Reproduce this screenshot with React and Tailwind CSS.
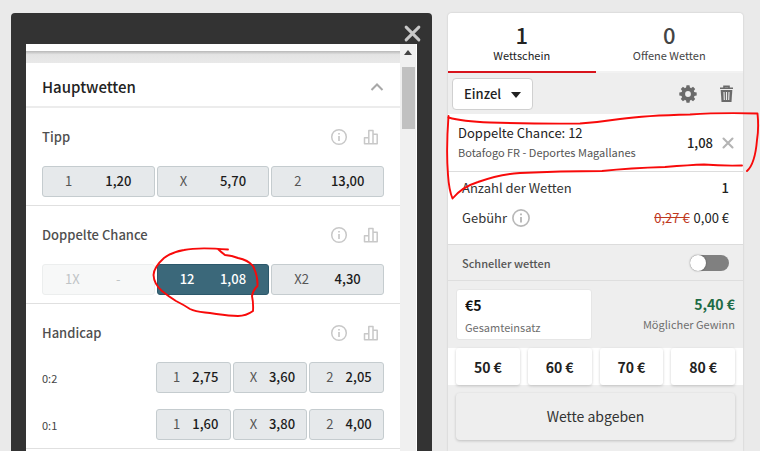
import React, { useState } from "react";

function InfoIcon({ className }) {
  return (
    <svg viewBox="0 0 18 18" fill="none" className={className} aria-hidden="true">
      <circle cx="9" cy="9" r="7.3" stroke="currentColor" strokeWidth="1.5" />
      <path d="M9 8v5M9 5v1.6" stroke="currentColor" strokeWidth="1.7" />
    </svg>
  );
}

function StatsIcon() {
  return (
    <svg viewBox="0 0 16 16" fill="none" className="size-4" aria-hidden="true">
      <path
        d="M1.500 14.700v-6h4.300v6zM5.800 14.700v-13.200h4.200v13.200zM10 14.700v-9.500h4.200v9.500z"
        stroke="currentColor"
        strokeWidth="1.5"
        strokeLinejoin="round"
      />
    </svg>
  );
}

function GearIcon() {
  const teeth = [0, 45, 90, 135, 180, 225, 270, 315];
  return (
    <svg viewBox="0 0 18 18" className="size-[18px]" aria-hidden="true">
      <circle cx="9" cy="9" r="4.8" fill="none" stroke="currentColor" strokeWidth="3.8" />
      {teeth.map((a) => (
        <path key={a} d="M7 3 7.5 0.3h3L11 3z" fill="currentColor" transform={`rotate(${a} 9 9)`} />
      ))}
    </svg>
  );
}

function TrashIcon() {
  return (
    <svg viewBox="0 0 16 18" fill="none" className="h-[18px] w-4" aria-hidden="true">
      <path d="M1 3.2h13M5 3V1.400h5V3" stroke="currentColor" strokeWidth="1.6" />
      <path d="M1.700 5h11.600l-.8 12H2.500z" fill="currentColor" />
      <path d="M5 7l.3 8M7.500 7v8M10 7l-.3 8" stroke="#eeeeee" strokeWidth="1.1" />
    </svg>
  );
}

function CloseIcon({ className, width }) {
  return (
    <svg viewBox="0 0 16 16" fill="none" className={className} aria-hidden="true">
      <path d="M2 2l12 12M14 2L2 14" stroke="currentColor" strokeWidth={width} strokeLinecap="round" />
    </svg>
  );
}

function Odd({ label, value, state, compact }) {
  const look =
    state === "selected"
      ? "border-[#2c586b] bg-[#3b687a] text-white"
      : state === "disabled"
        ? "border-[#eceeee] bg-[#f7f8f8] text-[#bfc4c6]"
        : "border-[#c5cccf] bg-[#e6e9eb] text-[#555555]";
  const valueLook = state ? "" : "text-[#1c1c1c]";
  return (
    <button
      type="button"
      disabled={state === "disabled"}
      className={`flex h-[31px] items-center rounded-[3px] border pb-[2px] text-left text-[13px] leading-5 ${compact ? "pr-[6px] pl-4" : "pr-[10px] pl-[22px]"} ${look}`}
    >
      <span className={`${compact ? "w-[14px]" : "w-7"} ${state === "selected" ? "font-medium" : ""}`}>{label}</span>
      <span className={`flex-1 text-center ${state === "disabled" ? "" : "font-medium"} ${valueLook}`}>{value}</span>
    </button>
  );
}

function Market({ title, children }) {
  return (
    <section className="border-b border-[#e0e0e0] px-4 pt-[19px] pb-2">
      <div className="mb-[19px] flex h-5 items-center">
        <h3 className="flex-1 text-[13px] leading-5 font-medium text-[#4f4f4f]">{title}</h3>
        <button type="button" aria-label="Info" className="mr-[15px] text-[#c8c8c8]">
          <InfoIcon className="size-[18px]" />
        </button>
        <button type="button" aria-label="Statistik" className="mr-[5px] text-[#c8c8c8]">
          <StatsIcon />
        </button>
      </div>
      {children}
    </section>
  );
}

function HandicapRow({ name, odds }) {
  return (
    <div className="flex items-center">
      <span className="w-1/3 text-[11px] leading-4 text-[#444444]">{name}</span>
      <div className="grid w-2/3 grid-cols-3 gap-[2px]">
        <Odd compact label="1" value={odds[0]} />
        <Odd compact label="X" value={odds[1]} />
        <Odd compact label="2" value={odds[2]} />
      </div>
    </div>
  );
}

function MarketsPanel() {
  return (
    <div className="flex flex-col rounded-t-[4px] bg-[#333333] px-[15px]">
      <div className="flex h-[31px] items-end justify-end">
        <button type="button" aria-label="Schließen" className="-mr-1 mb-[2px] text-[#c8c8c8]">
          <CloseIcon className="size-[17px]" width="2.8" />
        </button>
      </div>
      <div className="flex flex-1 bg-white">
        <div className="flex-1">
          <div className="h-[7px] bg-white" />
          <div className="h-3 bg-linear-to-b from-[#b8b8b8] via-[#e4e4e4] via-30% to-[#e9e9e9]" />
          <div className="flex h-[45px] items-center border-b-2 border-[#ececec] px-4 pt-1">
            <h2 className="flex-1 text-[15px] leading-6 font-medium text-[#222222]">Hauptwetten</h2>
            <button type="button" aria-label="Einklappen" className="text-[#a8a8a8]">
              <svg viewBox="0 0 14 8" fill="none" className="h-2 w-[14px]" aria-hidden="true">
                <path d="M1.500 7 7 1.500 12.500 7" stroke="currentColor" strokeWidth="2" />
              </svg>
            </button>
          </div>
          <Market title="Tipp">
            <div className="grid grid-cols-3 gap-[2px]">
              <Odd label="1" value="1,20" />
              <Odd label="X" value="5,70" />
              <Odd label="2" value="13,00" />
            </div>
          </Market>
          <Market title="Doppelte Chance">
            <div className="grid grid-cols-3 gap-[2px]">
              <Odd label="1X" value="-" state="disabled" />
              <Odd label="12" value="1,08" state="selected" />
              <Odd label="X2" value="4,30" />
            </div>
          </Market>
          <Market title="Handicap">
            <div className="flex flex-col gap-4">
              <HandicapRow name="0:2" odds={["2,75", "3,60", "2,05"]} />
              <HandicapRow name="0:1" odds={["1,60", "3,80", "4,00"]} />
            </div>
          </Market>
        </div>
        <div className="mr-px flex w-4 flex-col items-center bg-[#f0f0f0]">
          <svg viewBox="0 0 8 5" className="mt-[6px] mb-3 h-[5px] w-2" aria-hidden="true">
            <path d="M0 5 4 0l4 5z" fill="#444444" />
          </svg>
          <div className="h-[62px] w-[13px] bg-[#c1c1c1]" />
        </div>
      </div>
    </div>
  );
}

function Tab({ count, label, active }) {
  return (
    <button
      type="button"
      role="tab"
      aria-selected={active}
      className={`flex h-[60px] flex-1 flex-col items-center border-b-2 pt-2 ${active ? "border-[#d8141c] text-[#222222]" : "border-[#f2f2f2] text-[#444444]"}`}
    >
      <span className="text-[22px] leading-[26px] font-medium">{count}</span>
      <span className="text-[11px] leading-4">{label}</span>
    </button>
  );
}

function BetSlip() {
  const [fast, setFast] = useState(false);
  return (
    <div className="flex flex-col rounded-t-[4px] bg-[#eeeeee] text-[#333333] shadow-[0_0_2px_rgba(0,0,0,0.2)]">
      <div role="tablist" className="flex overflow-hidden rounded-t-[4px] bg-white">
        <Tab count="1" label="Wettschein" active />
        <Tab count="0" label="Offene Wetten" active={false} />
      </div>
      <div className="flex h-[41px] items-center pr-2 pl-1 text-[#6a6a6a]">
        <div className="relative">
          <select
            aria-label="Wettart"
            className="h-8 w-[81px] appearance-none rounded-[4px] border border-[#d0d0d0] bg-white pl-[11px] text-[13px] leading-5 font-medium text-[#222222]"
          >
            <option>Einzel</option>
          </select>
          <svg viewBox="0 0 10 6" className="pointer-events-none absolute top-[14px] right-3 h-[6px] w-[10px]" aria-hidden="true">
            <path d="M0 0h10L5 6z" fill="#222222" />
          </svg>
        </div>
        <button type="button" aria-label="Einstellungen" className="mr-[22px] ml-auto">
          <GearIcon />
        </button>
        <button type="button" aria-label="Alle löschen">
          <TrashIcon />
        </button>
      </div>
      <div className="flex h-[58px] items-center border-b border-[#dddddd] bg-white pr-[9px] pl-[10px]">
        <div className="flex-1 pb-[2px]">
          <p className="text-[13px] leading-5 text-[#222222]">Doppelte Chance: 12</p>
          <p className="text-[11px] leading-[18px] text-[#555555]">Botafogo FR - Deportes Magallanes</p>
        </div>
        <span className="mr-[9px] text-[13px] leading-5 font-medium text-[#222222]">1,08</span>
        <button type="button" aria-label="Wette entfernen" className="text-[#b4b4b4]">
          <CloseIcon className="size-3" width="2.8" />
        </button>
      </div>
      <dl className="flex flex-col gap-[10px] bg-white px-[14px] pt-[6px] pb-4 text-[13px] leading-5">
        <div className="flex justify-between">
          <dt>Anzahl der Wetten</dt>
          <dd className="font-medium text-[#222222]">1</dd>
        </div>
        <div className="flex justify-between">
          <dt className="flex items-center gap-1">
            Gebühr <InfoIcon className="size-5 text-[#b8b8b8]" />
          </dt>
          <dd className="flex gap-1 text-[#222222]">
            <s className="text-[#c0391f]">0,27 €</s>
            <span>0,00 €</span>
          </dd>
        </div>
      </dl>
      <div className="flex h-9 items-center justify-between border-t border-[#dcdcdc] px-[14px]">
        <label htmlFor="fast" className="text-[11px] leading-4 font-medium text-[#555555]">
          Schneller wetten
        </label>
        <input
          id="fast"
          type="checkbox"
          role="switch"
          checked={fast}
          onChange={(e) => setFast(e.target.checked)}
          className="h-4 w-[39px] appearance-none rounded-full bg-[#808080] before:block before:size-4 before:rounded-full before:bg-white before:shadow-[0_0_2px_rgba(0,0,0,0.4)] checked:bg-[#3b687a] checked:before:ml-auto"
        />
      </div>
      <div className="flex justify-between border-t border-[#dedede] px-2 pt-2 pb-2">
        <div className="flex h-[51px] w-[136px] flex-col rounded-[3px] border border-[#e6e6e6] bg-white px-2 pt-[5px]">
          <input
            id="stake"
            defaultValue="€5"
            className="h-5 w-full bg-transparent text-sm leading-5 font-bold text-[#111111] outline-none"
          />
          <label htmlFor="stake" className="mt-1 text-[11px] leading-4 text-[#6e6e6e]">
            Gesamteinsatz
          </label>
        </div>
        <div className="pt-[5px] text-right">
          <p className="text-sm leading-5 font-bold text-[#1d6b45]">5,40 €</p>
          <p className="text-[11px] leading-5 text-[#6e6e6e]">Möglicher Gewinn</p>
        </div>
      </div>
      <div className="grid grid-cols-4 gap-2 bg-white px-2">
        {["50 €", "60 €", "70 €", "80 €"].map((amount) => (
          <button
            key={amount}
            type="button"
            className="h-[37px] rounded-[3px] bg-white text-sm leading-5 font-bold text-[#222222] shadow-[0_1px_3px_rgba(0,0,0,0.2)]"
          >
            {amount}
          </button>
        ))}
      </div>
      <div className="px-2 pt-2 pb-[10px]">
        <button
          type="button"
          className="h-[47px] w-full rounded-[4px] bg-[#eeeeee] pb-[2px] text-sm leading-5 text-[#333333] shadow-[0_1px_3px_rgba(0,0,0,0.2)]"
        >
          Wette abgeben
        </button>
      </div>
    </div>
  );
}

function Markup() {
  return (
    <svg
      viewBox="0 0 760 451"
      fill="none"
      className="pointer-events-none absolute top-0 left-0 h-[451px] w-[760px]"
      aria-hidden="true"
    >
      <g stroke="#f80a0a" strokeWidth="1.9" strokeLinecap="round" strokeLinejoin="round">
        <path d="M228 249.500Q198 247 184 250Q172 252 164 258Q154 267 153.500 275Q154 284 162 291Q168 296 176 301Q184 305 190 309Q195 311.500 205 312.500C218 314 226 316 238 316Q246 316 253 311Q253.500 303 252 296Q253 290 257.500 286Q258 276 253 266Q248 260 238 258Q232 255.500 225 255Q221 252 218 249" />
        <path d="M448.500 116Q446 150 448 175Q449 190 452.500 198.500Q462 187 478 182Q500 174 520 173Q560 171 602 171Q630 168 665 167Q690 165 704 164.500Q722 166 742 165.500" />
        <path d="M448.500 117.500Q462 121.500 490 122.500Q540 124 580 123.500Q600 122 620 119Q645 115.500 690 114.500Q720 112.500 757.500 113.500Q759 128 757 140Q755 164 747 171" />
      </g>
    </svg>
  );
}

export default function App() {
  return (
    <main className="relative grid min-h-screen grid-cols-[421fr_295fr] gap-4 overflow-hidden bg-[#eaeaea] pt-[13px] pr-[17px] pl-[11px] font-['Noto_Sans_CJK_SC','Noto_Sans',sans-serif]">
      <MarketsPanel />
      <BetSlip />
      <Markup />
    </main>
  );
}
